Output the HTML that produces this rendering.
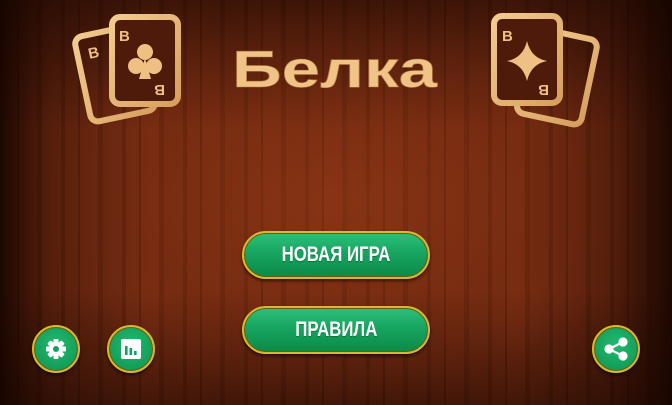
<!DOCTYPE html>
<html><head><meta charset="utf-8"><style>
html,body{margin:0;padding:0}
body{width:672px;height:405px;overflow:hidden;position:relative;font-family:"Liberation Sans",sans-serif;background:#5a200c;}
.bg{position:absolute;inset:0;
background:
radial-gradient(ellipse 60% 65% at 50% 50%, rgba(150,58,22,0.5) 0%, rgba(110,40,15,0.25) 50%, rgba(20,5,0,0) 75%),
linear-gradient(90deg, rgba(20,4,0,0.9) 0px, rgba(20,4,0,0.35) 50px, rgba(0,0,0,0) 150px, rgba(0,0,0,0) 520px, rgba(20,4,0,0.35) 610px, rgba(20,4,0,0.9) 672px),
linear-gradient(180deg, rgba(20,4,0,0.6) 0px, rgba(0,0,0,0) 130px, rgba(0,0,0,0) 290px, rgba(20,4,0,0.55) 405px),
repeating-linear-gradient(90deg, rgba(0,0,0,0.12) 0 4px, rgba(255,120,60,0.04) 4px 17px, rgba(0,0,0,0.16) 17px 19px, rgba(255,110,60,0.05) 19px 37px, rgba(0,0,0,0.1) 37px 42px, rgba(255,130,70,0.03) 42px 61px),
#742a10;}
.btn{position:absolute;left:242px;width:188px;height:48px;border-radius:24px;box-sizing:border-box;
border:2px solid #d8b830;background:linear-gradient(180deg,#2dc07a 0%,#17a560 45%,#0b8a48 100%);
box-shadow:0 2px 3px rgba(0,0,0,0.6), inset 0 0 0 1px #6a5a10;
color:#fff;text-align:center;line-height:44px;}
.btn span{display:inline-block;font-weight:bold;font-size:21px;transform:scaleX(0.8);text-shadow:0 1px 1px rgba(0,0,0,0.3)}
.rb{position:absolute;width:48px;height:48px;border-radius:50%;box-sizing:border-box;border:2px solid #d8b830;
background:radial-gradient(circle at 50% 40%,#22b870,#0d9350);box-shadow:0 2px 3px rgba(0,0,0,0.6), inset 0 0 0 1px #6a5a10;}
.rb svg{position:absolute;left:0;top:0}
</style></head><body>
<div class="bg"></div>
<svg width="672" height="140" style="position:absolute;left:0;top:0">
 <defs><linearGradient id="g" x1="0" y1="0" x2="1" y2="1"><stop offset="0" stop-color="#f3cc8e"/><stop offset="1" stop-color="#d79f5e"/></linearGradient></defs>
 <g fill="none" stroke="url(#g)" stroke-width="6">
  <rect x="82" y="30" width="66" height="87" rx="8" transform="rotate(-12 115 73)"/>
  <rect x="112" y="17" width="66" height="87" rx="8" fill="#4e1a0a"/>
  <rect x="524" y="33" width="66" height="87" rx="8" transform="rotate(12 557 76)"/>
  <rect x="494" y="16" width="66" height="87" rx="8" fill="#4e1a0a"/>
 </g>
 <g fill="#eec083" font-family="Liberation Sans,sans-serif" font-size="15" font-weight="bold">
  <text x="88" y="58" transform="rotate(-12 93 52)">B</text>
  <text x="119" y="41">B</text>
  <text x="155" y="97" transform="rotate(180 160 91)">B</text>
  <text x="502" y="41">B</text>
  <text x="539" y="97" transform="rotate(180 544 91)">B</text>
  <circle cx="145" cy="52" r="8"/><circle cx="136" cy="66" r="8"/><circle cx="154" cy="66" r="8"/>
  <path d="M145 58 L139 79 L151 79 Z"/>
  <path d="M527 41 Q531 58 547 61 Q531 64 527 81 Q523 64 507 61 Q523 58 527 41Z"/>
 </g>
 <text x="232" y="87" font-family="Liberation Sans,sans-serif" font-size="52" fill="#f0c487" stroke="#b07840" stroke-width="0.6" font-weight="bold" textLength="205" lengthAdjust="spacingAndGlyphs">Белка</text>
</svg>
<div class="btn" style="top:231px"><span>НОВАЯ ИГРА</span></div>
<div class="btn" style="top:306px"><span>ПРАВИЛА</span></div>
<div class="rb" style="left:32px;top:325px">
 <svg width="44" height="44" viewBox="0 0 44 44"><g transform="translate(22 22)" fill="#fff">
  <circle r="7"/>
  <g><rect x="-2.5" y="-10" width="5" height="20" rx="1"/><rect x="-2.5" y="-10" width="5" height="20" rx="1" transform="rotate(45)"/><rect x="-2.5" y="-10" width="5" height="20" rx="1" transform="rotate(90)"/><rect x="-2.5" y="-10" width="5" height="20" rx="1" transform="rotate(135)"/></g>
  <circle r="3" fill="#14a060"/></g></svg>
</div>
<div class="rb" style="left:107px;top:325px">
 <svg width="44" height="44" viewBox="0 0 44 44"><rect x="12" y="12" width="20" height="20" rx="2" fill="#fff"/>
  <rect x="16" y="19" width="2.6" height="9" fill="#14a060"/><rect x="20.5" y="21" width="2.6" height="7" fill="#14a060"/><rect x="25" y="24" width="2.6" height="4" fill="#14a060"/></svg>
</div>
<div class="rb" style="left:592px;top:325px">
 <svg width="44" height="44" viewBox="0 0 44 44"><g fill="#fff" stroke="#fff" stroke-width="2.2">
  <line x1="29" y1="15" x2="15" y2="22"/><line x1="15" y1="22" x2="29" y2="29"/>
  <circle cx="29" cy="15" r="3.5"/><circle cx="15" cy="22" r="3.5"/><circle cx="29" cy="29" r="3.5"/></g></svg>
</div>
</body></html>
